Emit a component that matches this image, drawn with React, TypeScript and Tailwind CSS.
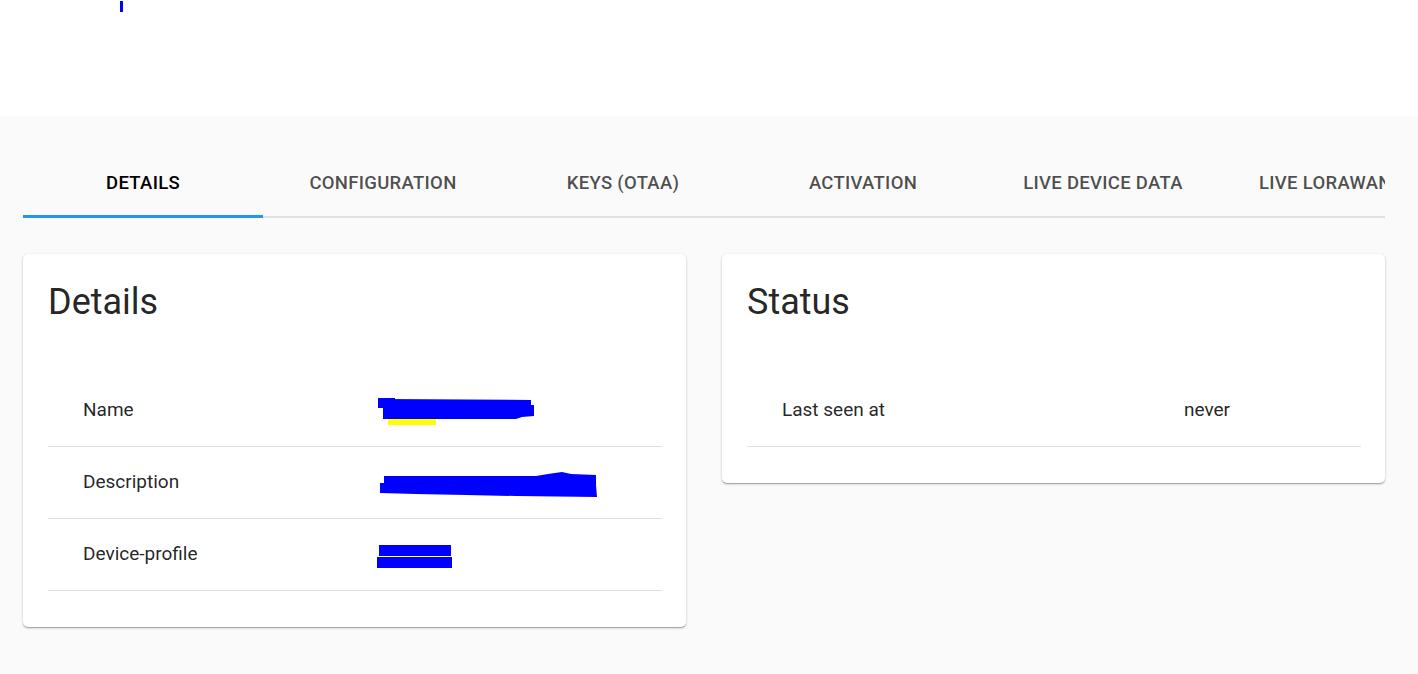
import React from "react";

type Row = { label: string; value: React.ReactNode };

const tabs = ["Details", "Configuration", "Keys (OTAA)", "Activation", "Live device data", "Live LoRaWAN frames"];

// redacted values are scribbled over with a blue marker in the screenshot
const NameScribble = () => (
  <svg width="162" height="30" viewBox="0 0 162 30" className="block">
    <rect x="2" y="2" width="17" height="10" fill="#0000ff" />
    <polygon points="7,3 155,4 155,9 158,9 158,20 146,21 140,23 7,23" fill="#0000ff" />
    <rect x="12" y="23" width="48" height="6" fill="#ffff00" />
  </svg>
);

const DescriptionScribble = () => (
  <svg width="224" height="30" viewBox="0 0 224 30" className="block">
    <polygon
      points="8,8 160,8 172,6 186,4 195,6 220,7 220,17 221,29 140,28 90,27 40,26 4,25 4,15 8,15"
      fill="#0000ff"
    />
  </svg>
);

const ProfileScribble = () => (
  <svg width="80" height="28" viewBox="0 0 80 28" className="block">
    <rect x="3" y="4" width="72" height="11" fill="#0000ff" />
    <rect x="1" y="16" width="75" height="11" fill="#0000ff" />
  </svg>
);

const InfoCard = ({ title, rows, labelWidth }: { title: string; rows: Row[]; labelWidth: string }) => {
  return (
    <div className="rounded-[5px] bg-white pl-[25px] pr-[24px] pt-[28px] pb-[36px] shadow-[0_1px_3px_rgba(0,0,0,0.2),0_1px_1px_rgba(0,0,0,0.14),0_2px_1px_-1px_rgba(0,0,0,0.12)]">
      <h2 className="text-[36px] leading-[40px] text-[rgba(0,0,0,0.87)] mb-[53px]">{title}</h2>
      <div className="flex flex-col">
        {rows.map((row) => (
          <div key={row.label} className="flex items-center h-[72px] border-b border-[#e0e0e0] text-[19px] text-[rgba(0,0,0,0.87)]">
            <div className={`${labelWidth} shrink-0 pl-[35px]`}>{row.label}</div>
            <div>{row.value}</div>
          </div>
        ))}
      </div>
    </div>
  );
};

export default function App() {
  const detailRows: Row[] = [
    { label: "Name", value: <NameScribble /> },
    { label: "Description", value: <DescriptionScribble /> },
    { label: "Device-profile", value: <ProfileScribble /> },
  ];

  const statusRows: Row[] = [{ label: "Last seen at", value: <span className="pl-[9px]">never</span> }];

  return (
    <div className="min-h-screen bg-[#fafafa] font-['Roboto',sans-serif]">
      {/* header strip */}
      <div className="h-[116px] bg-white pl-[120px] pt-px">
        <div className="w-[3px] h-[11px] bg-[#0000ff]" />
      </div>

      <div className="pl-[23px] pr-[33px] pt-[34px]">
        {/* Tabs */}
        <div className="overflow-hidden">
          <div className="flex border-b-2 border-[#e0e0e0]">
            {tabs.map((tab, i) => (
              <div
                key={tab}
                className={`relative shrink-0 h-[66px] pt-[2px] flex items-center text-[18.5px] font-medium uppercase tracking-[0.3px] whitespace-nowrap ${
                  i === tabs.length - 1 ? "w-[284px] pl-[36px]" : "w-[240px] justify-center"
                } ${i === 0 ? "text-black" : "text-[rgba(0,0,0,0.7)]"}`}
              >
                {tab}
                {i === 0 && <div className="absolute left-0 right-0 -bottom-[2px] h-[3px] bg-[#2196f3]" />}
              </div>
            ))}
          </div>
        </div>

        {/* Cards */}
        <div className="grid grid-cols-2 gap-[36px] mt-[36px] items-start">
          <InfoCard title="Details" rows={detailRows} labelWidth="w-[328px]" />
          <InfoCard title="Status" rows={statusRows} labelWidth="w-[428px]" />
        </div>
      </div>
    </div>
  );
}
